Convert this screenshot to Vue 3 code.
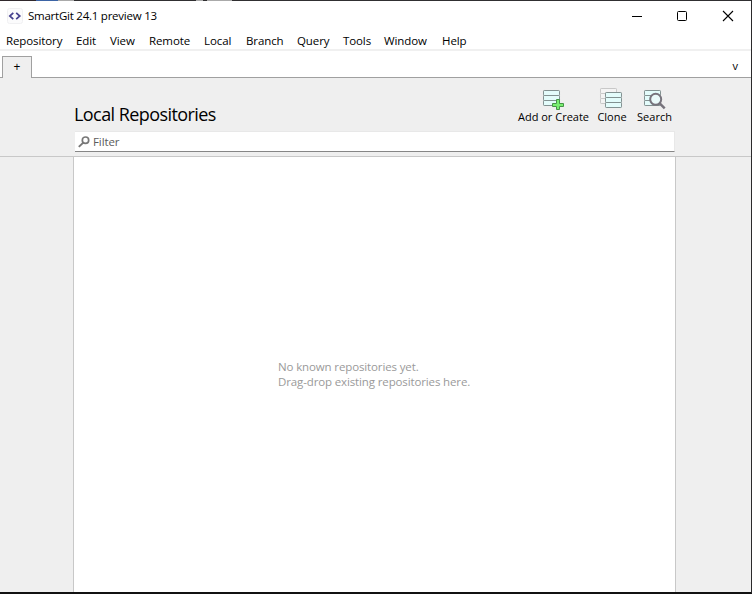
<script setup>
const menus = ['Repository', 'Edit', 'View', 'Remote', 'Local', 'Branch', 'Query', 'Tools', 'Window', 'Help']
</script>

<template>
  <div class="window">
    <div class="backdrop"></div>
    <header class="titlebar">
      <svg class="logo" width="16" height="16" viewBox="0 0 16 16">
        <rect x=".5" y=".5" width="15" height="15" rx="2" fill="#fbfbfc" stroke="#f0f0f2" />
        <path d="M6.3 4.8 2.8 8l3.5 3.2M9.2 4.8 12.8 8l-3.6 3.2" fill="none" stroke="#47428f" stroke-width="1.7" />
      </svg>
      <span class="title">SmartGit 24.1 preview 13</span>
      <svg class="controls" width="104" height="12" viewBox="0 0 104 12" fill="none" stroke="#000">
        <path d="M0 6.5h10" />
        <rect x="45.5" y="1.5" width="9" height="9" rx="1" />
        <path d="m91 1 10 10M101 1 91 11" stroke-width="1.1" />
      </svg>
    </header>
    <nav class="menubar">
      <span v-for="m in menus" :key="m">{{ m }}</span>
    </nav>
    <div class="tabs">
      <div class="tab">+</div>
      <span class="more">v</span>
    </div>
    <section class="head">
      <div class="toprow">
        <h1>Local Repositories</h1>
        <div class="tools">
          <div class="tool add">
            <svg width="24" height="21" viewBox="0 0 24 21">
              <g fill="#e3fcfb" stroke="#829191">
                <rect x="2.5" y="1.5" width="16" height="5" rx=".7" />
                <rect x="2.5" y="6.5" width="16" height="5" rx=".7" />
                <rect x="2.5" y="11.5" width="16" height="5" rx=".7" />
              </g>
              <path d="M15.5 10.5h3v4h4v3h-4v3h-3v-3h-4v-3h4z" fill="#78ee70" stroke="#469448" />
            </svg>
            <span>Add or Create</span>
          </div>
          <div class="tool clone">
            <svg width="24" height="21" viewBox="0 0 24 21">
              <g fill="#f4f4f4" stroke="#c8c8c8">
                <rect x="1.5" y="-.5" width="16" height="5" rx=".7" />
                <rect x="1.5" y="4.5" width="16" height="5" rx=".7" />
                <rect x="1.5" y="9.5" width="16" height="5" rx=".7" />
              </g>
              <g fill="#e3fcfb" stroke="#829191">
                <rect x="6.5" y="3.5" width="16" height="5" rx=".7" />
                <rect x="6.5" y="8.5" width="16" height="5" rx=".7" />
                <rect x="6.5" y="13.5" width="16" height="5" rx=".7" />
              </g>
            </svg>
            <span>Clone</span>
          </div>
          <div class="tool search">
            <svg width="24" height="21" viewBox="0 0 24 21">
              <g fill="#e3fcfb" stroke="#829191">
                <rect x="2.5" y="1.5" width="16" height="5" rx=".7" />
                <rect x="2.5" y="6.5" width="16" height="5" rx=".7" />
                <rect x="2.5" y="11.5" width="16" height="5" rx=".7" />
              </g>
              <circle cx="13.7" cy="10.3" r="5.5" fill="#eafafa" stroke="#77737c" stroke-width="2" />
              <path d="m17.7 14.3 5 5" stroke="#77737c" stroke-width="2.5" />
            </svg>
            <span>Search</span>
          </div>
        </div>
      </div>
      <div class="filter">
        <svg width="12" height="12" viewBox="0 0 12 12" fill="none" stroke="#777">
          <circle cx="7.5" cy="4.2" r="3.2" stroke-width="1.7" />
          <path d="M5.3 6.6.8 10.9" stroke-width="2" />
        </svg>
        <span>Filter</span>
      </div>
    </section>
    <main class="body">
      <div class="list">
        <p>No known repositories yet.<br />Drag-drop existing repositories here.</p>
      </div>
    </main>
  </div>
</template>

<style>
body { margin: 0; overflow: hidden; }
</style>

<style scoped>
.window {
  box-sizing: border-box;
  width: 752px;
  height: 594px;
  display: flex;
  flex-direction: column;
  background: #fff;
  border-right: 1px solid #2b2a2c;
  border-bottom: 2px solid #111;
  font-family: "Open Sans", "Noto Sans", sans-serif;
  font-size: 11.5px;
  letter-spacing: -0.1px;
  color: #000;
  white-space: nowrap;
}
.backdrop {
  height: 1px;
  flex: none;
  background: linear-gradient(90deg, #30282c 36px, #3d64a5 36px 58px, #aaa 58px 74px, #302f31 74px 196px, #aaa 196px 203px, #302f31 203px 207px, #aaa 207px 232px, #302f31 232px);
}
.titlebar {
  height: 30px;
  flex: none;
  display: flex;
  align-items: center;
  padding: 0 15px 0 7px;
}
.title { margin-left: 5px; padding-bottom: 2px; letter-spacing: -0.24px; }
.controls { margin-left: auto; }
.menubar {
  box-sizing: border-box;
  height: 20px;
  flex: none;
  display: grid;
  grid-template-columns: 70px 34px 39px 55px 42px 51px 46px 41px 58px 40px;
  padding-left: 6px;
  line-height: 20px;
  border-bottom: 2px solid #f0f0f0;
}
.tabs {
  box-sizing: border-box;
  height: 27px;
  flex: none;
  display: flex;
  justify-content: space-between;
  align-items: flex-end;
  padding: 0 13px 0 2px;
  border-bottom: 1px solid #a0a0a0;
}
.tab {
  box-sizing: border-box;
  width: 30px;
  height: 22px;
  margin-bottom: -1px;
  border: 1px solid #a0a0a0;
  border-bottom: 0;
  background: #efefef;
  text-align: center;
  line-height: 20px;
  font-size: 12px;
}
.more { line-height: 22px; font-size: 11px; }
.head {
  box-sizing: border-box;
  height: 79px;
  flex: none;
  padding: 0 76px 0 74px;
  background: #efefef;
  border-bottom: 1px solid #c8c8c8;
}
.toprow { height: 53px; display: flex; justify-content: space-between; }
h1 {
  margin: 22px 0 0;
  font-size: 18px;
  line-height: 28px;
  font-weight: 400;
  letter-spacing: -0.57px;
}
.tools { display: flex; padding-top: 11px; }
.tool { display: flex; flex-direction: column; align-items: center; line-height: 14px; }
.tool svg { overflow: visible; flex: none; }
.tool span { font-size: 11px; letter-spacing: 0; }
.add { width: 72px; margin-right: 7px; }
.add span { margin-left: 1px; }
.clone { width: 32px; margin-right: 9px; }
.clone svg { margin-right: 3px; }
.search svg { margin-right: 1px; }
.search { width: 35px; margin-right: 3px; }
.filter {
  box-sizing: border-box;
  width: 600px;
  height: 21px;
  margin-left: 1px;
  display: flex;
  align-items: center;
  gap: 3px;
  padding-left: 3px;
  background: #fff;
  border: 1px solid #e8e8e8;
  border-left: 0;
  border-bottom-color: #868686;
  color: #5c5c5c;
}
.body { flex: 1; padding: 0 75px 0 73px; background: #efefef; }
.list {
  box-sizing: border-box;
  height: 100%;
  border: 1px solid #c8c8c8;
  border-width: 0 1px;
  background: #fff;
  padding: 202px 0 0 204px;
}
p { margin: 0; line-height: 15px; letter-spacing: -0.13px; color: #9a9a9a; }
</style>
